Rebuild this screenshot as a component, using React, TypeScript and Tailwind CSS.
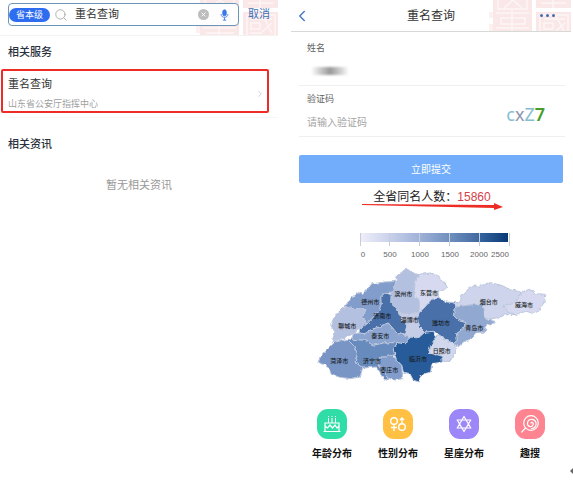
import type { ReactNode } from "react";
import { ChevronLeft, ChevronRight, Search } from "lucide-react";

const cities = [
  { name: "德州市", fill: "#829dcb", x: 181, y: 127, points: "103,135 125,105 150,90 158,98 185,65 225,60 258,58 250,90 225,92 212,105 214,126 207,145 190,165 170,187 158,165 165,140 130,140" },
  { name: "滨州市", fill: "#b4c0e0", x: 280, y: 102, points: "258,58 262,40 290,20 310,34 325,38 315,65 312,95 328,120 328,152 275,155 262,140 242,125 240,95 250,85" },
  { name: "东营市", fill: "#d6d9ef", x: 357, y: 98, points: "325,38 360,33 378,37 400,60 413,75 400,85 382,87 388,108 365,112 345,135 328,152 328,120 312,95 315,65" },
  { name: "聊城市", fill: "#b4c0e0", x: 112, y: 197, points: "103,135 130,140 165,140 158,165 170,187 150,200 130,215 105,228 65,240 75,210 62,190 75,160" },
  { name: "济南市", fill: "#4a70a9", x: 217, y: 167, points: "212,105 225,92 243,98 242,125 262,140 270,160 290,190 285,218 262,215 245,195 235,183 205,195 180,205 165,215 147,213 150,200 170,187 190,165 207,145 214,126" },
  { name: "淄博市", fill: "#c5cde7", x: 299, y: 181, points: "262,140 275,155 328,152 320,165 330,195 345,210 325,228 300,225 285,218 290,190 270,160" },
  { name: "潍坊市", fill: "#4a70a9", x: 393, y: 188, points: "320,165 328,152 345,135 365,112 388,108 410,120 435,122 438,135 430,160 445,175 468,182 460,200 440,215 442,235 430,245 410,235 392,222 370,208 345,210 330,195" },
  { name: "烟台市", fill: "#ced4eb", x: 536, y: 127, points: "435,122 450,120 455,100 485,72 510,72 540,62 575,70 600,83 635,90 622,112 625,122 580,130 600,155 560,168 525,172 520,128 470,130 438,135" },
  { name: "威海市", fill: "#d6d9ef", x: 642, y: 134, points: "635,90 658,82 680,95 708,97 700,125 685,148 670,155 650,148 640,150 620,160 600,155 580,130 625,122 622,112" },
  { name: "青岛市", fill: "#91a8d1", x: 493, y: 203, points: "438,135 470,130 520,125 525,172 555,178 545,190 530,185 526,210 500,212 492,222 480,232 460,240 445,255 430,245 442,235 440,215 460,200 468,182 445,175 430,160" },
  { name: "日照市", fill: "#d1d7ed", x: 395, y: 272, points: "380,222 392,222 410,235 430,245 440,262 420,298 398,298 395,283 378,278 355,272 365,245" },
  { name: "临沂市", fill: "#285b99", x: 324, y: 296, points: "250,262 262,242 288,245 300,225 325,228 345,210 370,208 380,222 365,245 355,272 378,278 395,283 397,300 365,305 362,330 330,340 328,360 310,355 300,335 280,330 275,310 260,295" },
  { name: "泰安市", fill: "#8ca5d0", x: 211, y: 229, points: "130,215 147,213 165,215 180,205 205,195 235,183 245,195 262,215 285,218 300,225 288,245 262,242 220,243 190,250 165,235 125,232" },
  { name: "济宁市", fill: "#688bbd", x: 186, y: 303, points: "112,232 125,232 165,235 190,250 220,243 262,242 250,262 254,278 230,285 210,285 200,300 215,320 235,350 225,355 200,315 158,318 135,300 142,275 130,250" },
  { name: "枣庄市", fill: "#829dcb", x: 238, y: 331, points: "210,285 230,285 248,278 260,295 275,310 278,350 250,355 230,345 215,320 200,300" },
  { name: "菏泽市", fill: "#7895c5", x: 88, y: 303, points: "22,300 30,285 50,265 75,240 112,232 130,250 142,275 135,300 158,318 150,345 120,350 85,345 65,335 50,310" },
];

const scale = [
  "from-[#eeeef9] to-[#cbd2eb]",
  "from-[#c8d0ea] to-[#a0b3d8]",
  "from-[#9eb1d7] to-[#7290bf]",
  "from-[#6f8fbd] to-[#4069a1]",
  "from-[#36649f] to-[#083a76]",
];

const ticks = [
  { label: "0", x: 3 },
  { label: "500", x: 30 },
  { label: "1000", x: 60 },
  { label: "1500", x: 90 },
  { label: "2000", x: 119 },
  { label: "2500", x: 140 },
];

function SealPattern() {
  return (
    <svg viewBox="0 0 82 36" preserveAspectRatio="xMaxYMin slice" className="pointer-events-none absolute top-0 right-0 h-full w-[82px]" fill="none" aria-hidden>
      <path d="M4 0h39v36H4zM47 0h35v8H47zM47 12h35v24H47z" fill="#fae8e8" />
      <path d="M0 12h4v6H0zM0 24h4v9H0z" fill="#fcf0f0" />
      <g stroke="#fdf5f5" strokeWidth="1.5">
        <path d="M9 0v9h29V0M15 8l9-8M33 8l-9-8M7 13h33M23 10v26M12 18h24v6H12zM7 28h33M10 33h28" />
        <path d="M52 3h25M64 0v8M51 36V15h28v21M55 19h21M55 23h9v6h-9zM67 16l9 17M76 23 66 32M54 33h12" />
      </g>
    </svg>
  );
}

function AgeIcon() {
  return (
    <svg viewBox="0 0 30 30" className="size-[30px]" fill="none" stroke="white" strokeWidth="1.2" aria-hidden>
      <path d="M8 22v-8h14v8M6.5 22.5h17M8 17l2.5 2 2.5-3 2.500 3 2.500-3 2 3 2-2" />
      <path d="M11.5 14V9M15 14V9M18.5 14V9M11.5 7v1M15 7v1M18.5 7v1" strokeWidth="1" />
    </svg>
  );
}

function GenderIcon() {
  return (
    <svg viewBox="0 0 30 30" className="size-[30px]" fill="none" stroke="white" strokeWidth="1.4" aria-hidden>
      <circle cx="11" cy="12" r="3.3" />
      <path d="M11 15.5V22M8 18.5h6M19 14.5V9M17 11l2-2 2 2" />
      <circle cx="19" cy="18" r="3.3" />
    </svg>
  );
}

function StarIcon() {
  return (
    <svg viewBox="0 0 30 30" className="size-[30px]" fill="none" stroke="white" strokeWidth="1.2" strokeLinejoin="round" aria-hidden>
      <path d="M15 7.5 21.8 19H8.2zM15 22.500 8.2 11h13.6z" />
    </svg>
  );
}

function LollipopIcon() {
  return (
    <svg viewBox="0 0 30 30" className="size-[30px]" fill="none" stroke="white" strokeWidth="1.2" strokeLinecap="round" aria-hidden>
      <circle cx="16" cy="14" r="7.3" />
      <path d="M10.5 19 6.8 23M16 14c1-1.5 3 0 2 2-1.5 3-6 1.5-5.5-2 .5-4.5 7-5 8.5-.5 1 4-2 6-4.5 6" />
    </svg>
  );
}

function Field({ id, label, children }: { id: string; label: string; children: ReactNode }) {
  return (
    <div className="mx-2 h-[51px] border-b border-[#efefef] px-2 pt-[5px]">
      <label htmlFor={id} className="block text-[9px] leading-4 text-[#606060]">{label}</label>
      {children}
    </div>
  );
}

function SearchPanel() {
  return (
    <section>
      <header className="relative flex h-9 items-start border-b border-[#f3f3f3] pt-[3px] pr-2 pl-2">
        <SealPattern />
        <div className="relative flex h-[23px] flex-1 items-center rounded-[4px] border border-[#6b94bb] bg-white/90">
          <button className="h-[14px] shrink-0 rounded-full bg-[#2f6df0] px-[7px] text-[9px] leading-[14px] text-white">省本级</button>
          <Search className="mx-1 size-[14px] shrink-0 text-[#a5a5a5]" strokeWidth={1.5} />
          <input aria-label="搜索" defaultValue="重名查询" className="w-0 min-w-0 flex-1 px-[3px] text-[11px] text-[#333] outline-none" />
          <button aria-label="清除" className="mr-[10px]">
            <svg viewBox="0 0 12 12" className="size-[11px]">
              <circle cx="6" cy="6" r="6" fill="#bdbdbd" />
              <path d="m4 4 4 4M8 4 4 8" stroke="white" />
            </svg>
          </button>
          <button aria-label="语音" className="mr-2">
            <svg viewBox="0 0 12 14" className="h-3 w-[11px]" fill="none" stroke="#3979e8">
              <rect x="4" y="1" width="4" height="7" rx="2" fill="#3979e8" />
              <path d="M2 6c0 5 8 5 8 0M6 10v3M4 13h4" />
            </svg>
          </button>
        </div>
        <button className="relative ml-[9px] text-[11px] leading-[23px] text-[#3f70b5]">取消</button>
      </header>
      <h2 className="px-2 pt-2 text-[11px] leading-4 font-medium text-[#29303b]">相关服务</h2>
      <a href="#service" className="mt-[9px] mr-[9px] ml-[1px] flex h-[44px] items-center justify-between rounded-[2px] border-2 border-[#ed2d25] pt-[6px] pr-[2px] pl-[5px]">
        <span>
          <span className="block text-[11px] leading-5 text-[#333]">重名查询</span>
          <span className="block text-[9px] leading-5 text-[#a0a0a0]">山东省公安厅指挥中心</span>
        </span>
        <ChevronRight className="size-[10px] text-[#c4c4c4]" strokeWidth={2} />
      </a>
      <div className="mt-1 ml-2 border-t border-[#f6f6f6]" />
      <h2 className="px-2 pt-[18px] text-[11px] leading-4 font-medium text-[#29303b]">相关资讯</h2>
      <p className="mt-[25px] text-center text-[11px] leading-4 text-[#999]">暂无相关资讯</p>
    </section>
  );
}

function ProvinceMap() {
  return (
    <svg viewBox="0 0 750 375" className="mx-auto w-[250px]" role="img" aria-label="山东省同名人数分布">
      <filter id="coast" colorInterpolationFilters="sRGB">
        <feTurbulence type="fractalNoise" baseFrequency="0.1" numOctaves="1" seed="4" />
        <feDisplacementMap in="SourceGraphic" scale="12" xChannelSelector="R" yChannelSelector="G" />
      </filter>
      <g filter="url(#coast)" stroke="#bbc6dc" strokeWidth="3" strokeLinejoin="round">
        {cities.map((city) => <polygon key={city.name} points={city.points} fill={city.fill} />)}
      </g>
      <g fill="#171b24" fontSize="18" fontWeight="500" textAnchor="middle">
        {cities.map((city) => <text key={city.name} x={city.x} y={city.y}>{city.name}</text>)}
      </g>
    </svg>
  );
}

const shortcuts = [
  { label: "年龄分布", color: "bg-[#30dda7]", icon: <AgeIcon /> },
  { label: "性别分布", color: "bg-[#ffc043]", icon: <GenderIcon /> },
  { label: "星座分布", color: "bg-[#9d87f8]", icon: <StarIcon /> },
  { label: "趣搜", color: "bg-[#fd8490]", icon: <LollipopIcon /> },
];

function ResultPanel() {
  return (
    <section>
      <header className="relative mr-[2px] grid h-8 grid-cols-3 items-center border-b border-[#d8d8d8]">
        <SealPattern />
        <button aria-label="返回"><ChevronLeft className="ml-[2px] size-[18px] text-[#4a7bc0]" strokeWidth={2} /></button>
        <h1 className="text-center text-xs text-[#333]">重名查询</h1>
        <button aria-label="更多" className="relative mr-4 flex gap-[3px] justify-self-end">
          <i className="size-[3px] rounded-full bg-[#456dae]" />
          <i className="size-[3px] rounded-full bg-[#456dae]" />
          <i className="size-[3px] rounded-full bg-[#456dae]" />
        </button>
      </header>
      <div className="pt-[3px]">
        <Field id="name" label="姓名">
          <input id="name" className="mt-[11px] ml-1 block h-2 w-[38px] bg-linear-to-r from-white via-[#999] to-white blur-[1px] outline-none" />
        </Field>
        <Field id="captcha" label="验证码">
          <div className="flex items-center pt-[3px]">
            <input id="captcha" placeholder="请输入验证码" className="h-6 w-0 flex-1 text-[10px] text-[#333] outline-none placeholder:text-[#a5a5a5]" />
            <span className="mr-3 -mt-4 font-['Noto_Sans'] text-lg leading-4 text-[#83bed2]">c<span className="text-[#8d96ab]">x</span>Z<span className="font-semibold text-[#459d2a]">7</span></span>
          </div>
        </Field>
      </div>
      <button className="mx-2 mt-[18px] block h-7 w-[calc(100%-18px)] rounded-[2px] bg-[#71adfb] text-[10px] text-white">立即提交</button>
      <p className="mt-1 text-center text-xs leading-5 text-[#222]">全省同名人数：<span className="text-[#d64046]">15860</span></p>
      <svg viewBox="0 0 141 8" className="mx-auto -mt-1 w-[141px]" aria-hidden>
        <path d="M0 1v1l132 3v2l9-3-9-4v2z" fill="#ed2d25" />
      </svg>
      <div className="pt-[22px] pl-[5px]">
        <div className="mx-auto w-[150px]">
          <div className="grid grid-cols-5 border-r border-[#c5ccda]">
            {scale.map((bar) => (
              <div key={bar} className="h-[13px] border-l border-[#c5ccda]">
                <div className={`h-[9px] bg-linear-to-r ${bar}`} />
              </div>
            ))}
          </div>
          <svg viewBox="0 0 150 16" className="w-full overflow-visible" fill="#666" fontSize="8" textAnchor="middle">
            {ticks.map((tick) => <text key={tick.label} x={tick.x} y="11">{tick.label}</text>)}
          </svg>
        </div>
        <ProvinceMap />
      </div>
      <nav className="mt-[22px] grid grid-cols-4 pr-[10px] pl-2">
        {shortcuts.map((item) => (
          <a key={item.label} href="#charts" className="flex flex-col items-center">
            <span className={`rounded-[11px] ${item.color}`}>{item.icon}</span>
            <span className="mt-[7px] text-[10px] leading-4 font-bold text-[#111]">{item.label}</span>
          </a>
        ))}
      </nav>
      <svg viewBox="0 0 3 6" className="mt-[6px] ml-auto h-[6px] w-[3px]" aria-hidden>
        <path d="M3 0v6L0 3z" fill="#666" />
      </svg>
    </section>
  );
}

export default function App() {
  return (
    <main className="grid grid-cols-[278fr_282fr] gap-[13px] bg-white font-['Liberation_Sans','Noto_Sans_CJK_SC',sans-serif]">
      <SearchPanel />
      <ResultPanel />
    </main>
  );
}
